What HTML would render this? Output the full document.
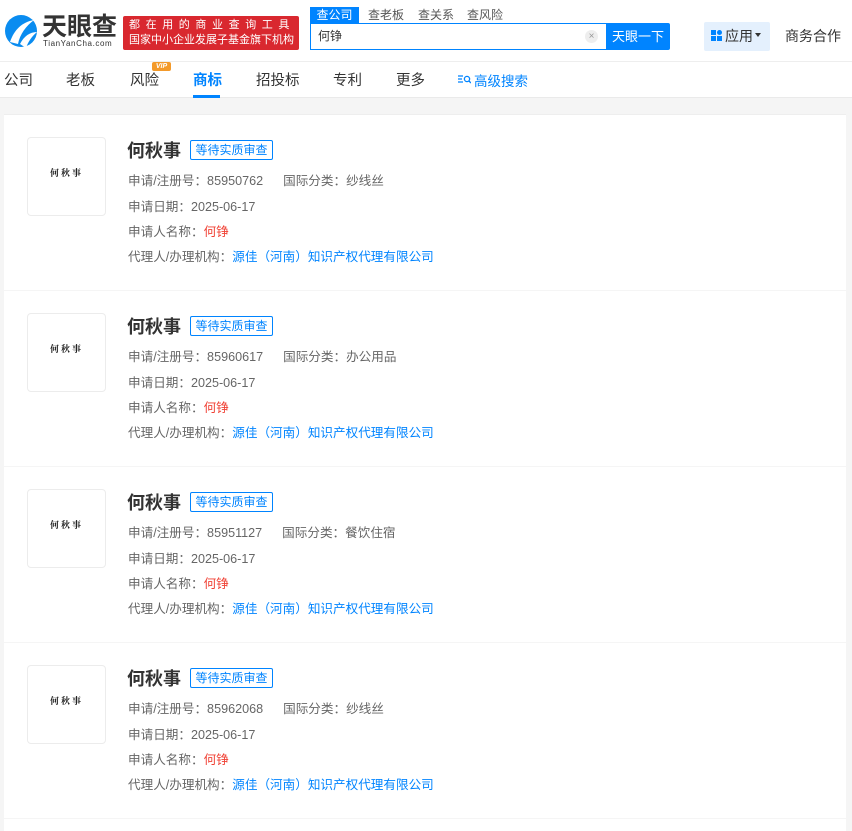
<!DOCTYPE html>
<html><head><meta charset="utf-8">
<style>
*{margin:0;padding:0;box-sizing:border-box}
html,body{width:852px;height:831px;overflow:hidden}
body{background:#f5f5f5;font-family:"Liberation Sans","Noto Sans CJK SC",sans-serif;position:relative}
.a{position:absolute;white-space:nowrap}
.hdr{position:absolute;left:0;top:0;width:852px;height:98px;background:#fff;border-bottom:1px solid #eaeaea}
.card{position:absolute;left:4px;width:842px;height:175px;background:#fff}
.logo{position:absolute;left:23px;top:22px;width:79px;height:79px;border:1px solid #ececec;border-radius:4px;font-family:"Noto Serif CJK SC",serif;font-size:9px;font-weight:bold;color:#222;text-align:center;line-height:69px;letter-spacing:2px}
.tt{position:absolute;left:123px;top:22px;font-size:18px;font-weight:bold;color:#333}
.tag{position:absolute;left:186px;top:25px;width:83px;height:20px;border:1px solid #0084ff;border-radius:2px;color:#0084ff;font-size:12px;text-align:center;line-height:18px}
.r{position:absolute;left:124px;font-size:12.6px;color:#666;white-space:nowrap}
.red{color:#f04134}.blue{color:#0084ff}
</style></head><body>
<div class="hdr">
<svg class="a" style="left:4px;top:12px" width="34" height="38" viewBox="0 0 34 38"><circle cx="17" cy="19" r="16" fill="#0a8cf0"/><path d="M6 30 C10 18 18 10 30 8 C22 14 16 22 14 32Z" fill="#fff"/><path d="M16 32 C20 24 26 20 33 20 C28 24 24 30 22 36Z" fill="#fff"/></svg>
<div class="a" style="left:42px;top:7px;font-size:25px;font-weight:bold;color:#333">天眼查</div>
<div class="a" style="left:43px;top:39px;font-size:8px;color:#333;letter-spacing:.6px">TianYanCha.com</div>
<div class="a" style="left:123px;top:16px;width:176px;height:34px;background:#d9282f;border-radius:2px;color:#fff;font-size:11px;line-height:15px;padding:2px 0 0 6px;overflow:hidden"><div style="letter-spacing:5.6px">都在用的商业查询工具</div><div>国家中小企业发展子基金旗下机构</div></div>
<div class="a" style="left:310px;top:7px;width:49px;height:16px;background:#0084ff;color:#fff;font-size:12px;text-align:center;line-height:16px">查公司</div>
<div class="a" style="left:368px;top:7px;font-size:12px;color:#555;line-height:16px">查老板</div>
<div class="a" style="left:418px;top:7px;font-size:12px;color:#555;line-height:16px">查关系</div>
<div class="a" style="left:467px;top:7px;font-size:12px;color:#555;line-height:16px">查风险</div>
<div class="a" style="left:310px;top:23px;width:297px;height:27px;border:1px solid #0084ff;font-size:12px;color:#333;line-height:25px;padding-left:7px">何铮</div>
<div class="a" style="left:585px;top:30px;width:13px;height:13px;border-radius:50%;background:#eee;color:#999;font-size:10px;text-align:center;line-height:13px">×</div>
<div class="a" style="left:606px;top:23px;width:64px;height:27px;background:#0084ff;color:#fff;font-size:13px;text-align:center;line-height:27px;border-radius:0 2px 2px 0">天眼一下</div>
<div class="a" style="left:704px;top:22px;width:66px;height:29px;background:#e4f0fd;border-radius:2px"></div>
<svg class="a" style="left:711px;top:30px" width="11" height="11"><rect x="0" y="0" width="5" height="5" fill="#0084ff"/><rect x="6" y="0" width="5" height="5" rx="2.5" fill="#0084ff"/><rect x="0" y="6" width="5" height="5" fill="#0084ff"/><rect x="6" y="6" width="5" height="5" fill="#0084ff"/></svg>
<div class="a" style="left:725px;top:26px;font-size:14px;color:#333">应用</div>
<div class="a" style="left:755px;top:33px;width:0;height:0;border-left:3.5px solid transparent;border-right:3.5px solid transparent;border-top:4px solid #333"></div>
<div class="a" style="left:785px;top:26px;font-size:14px;color:#333">商务合作</div>
<div class="a" style="left:0;top:61px;width:852px;height:1px;background:#eee"></div>
<div class="a" style="left:4px;top:69px;font-size:14.5px;color:#333">公司</div>
<div class="a" style="left:66px;top:69px;font-size:14.5px;color:#333">老板</div>
<div class="a" style="left:130px;top:69px;font-size:14.5px;color:#333">风险</div>
<div class="a" style="left:152px;top:62px;width:19px;height:9px;background:#f39a2b;border-radius:2px;color:#fff;font-size:7px;font-style:italic;font-weight:bold;text-align:center;line-height:9px">VIP</div>
<div class="a" style="left:193px;top:69px;font-size:14.5px;color:#0084ff;font-weight:bold">商标</div>
<div class="a" style="left:193px;top:95px;width:27px;height:3px;background:#0084ff"></div>
<div class="a" style="left:256px;top:69px;font-size:14.5px;color:#333">招投标</div>
<div class="a" style="left:333px;top:69px;font-size:14.5px;color:#333">专利</div>
<div class="a" style="left:396px;top:69px;font-size:14.5px;color:#333">更多</div>
<svg class="a" style="left:458px;top:75px" width="13" height="9"><path d="M0 1h5M0 4h4M0 7h5" stroke="#0084ff" stroke-width="1.3"/><circle cx="9" cy="4" r="2.6" fill="none" stroke="#0084ff" stroke-width="1.3"/><path d="M11 6l2 2" stroke="#0084ff" stroke-width="1.3"/></svg>
<div class="a" style="left:474px;top:70px;font-size:13.5px;color:#0084ff">高级搜索</div>
</div>
<div class="a" style="left:4px;top:114px;width:842px;height:1px;background:#eee"></div>

<div class="card" style="top:115px">
<div class="logo">何秋事</div><div class="tt">何秋事</div><div class="tag">等待实质审查</div>
<div class="r" style="top:55px">申请/注册号：85950762<span style="margin-left:20px">国际分类：纱线丝</span></div>
<div class="r" style="top:81px">申请日期：2025-06-17</div>
<div class="r" style="top:106px">申请人名称：<span class="red">何铮</span></div>
<div class="r" style="top:131px">代理人/办理机构：<span class="blue">源佳（河南）知识产权代理有限公司</span></div>
</div>
<div class="card" style="top:291px">
<div class="logo">何秋事</div><div class="tt">何秋事</div><div class="tag">等待实质审查</div>
<div class="r" style="top:55px">申请/注册号：85960617<span style="margin-left:20px">国际分类：办公用品</span></div>
<div class="r" style="top:81px">申请日期：2025-06-17</div>
<div class="r" style="top:106px">申请人名称：<span class="red">何铮</span></div>
<div class="r" style="top:131px">代理人/办理机构：<span class="blue">源佳（河南）知识产权代理有限公司</span></div>
</div>
<div class="card" style="top:467px">
<div class="logo">何秋事</div><div class="tt">何秋事</div><div class="tag">等待实质审查</div>
<div class="r" style="top:55px">申请/注册号：85951127<span style="margin-left:20px">国际分类：餐饮住宿</span></div>
<div class="r" style="top:81px">申请日期：2025-06-17</div>
<div class="r" style="top:106px">申请人名称：<span class="red">何铮</span></div>
<div class="r" style="top:131px">代理人/办理机构：<span class="blue">源佳（河南）知识产权代理有限公司</span></div>
</div>
<div class="card" style="top:643px">
<div class="logo">何秋事</div><div class="tt">何秋事</div><div class="tag">等待实质审查</div>
<div class="r" style="top:55px">申请/注册号：85962068<span style="margin-left:20px">国际分类：纱线丝</span></div>
<div class="r" style="top:81px">申请日期：2025-06-17</div>
<div class="r" style="top:106px">申请人名称：<span class="red">何铮</span></div>
<div class="r" style="top:131px">代理人/办理机构：<span class="blue">源佳（河南）知识产权代理有限公司</span></div>
</div>
<div class="card" style="top:819px;height:12px"></div>
</body></html>
